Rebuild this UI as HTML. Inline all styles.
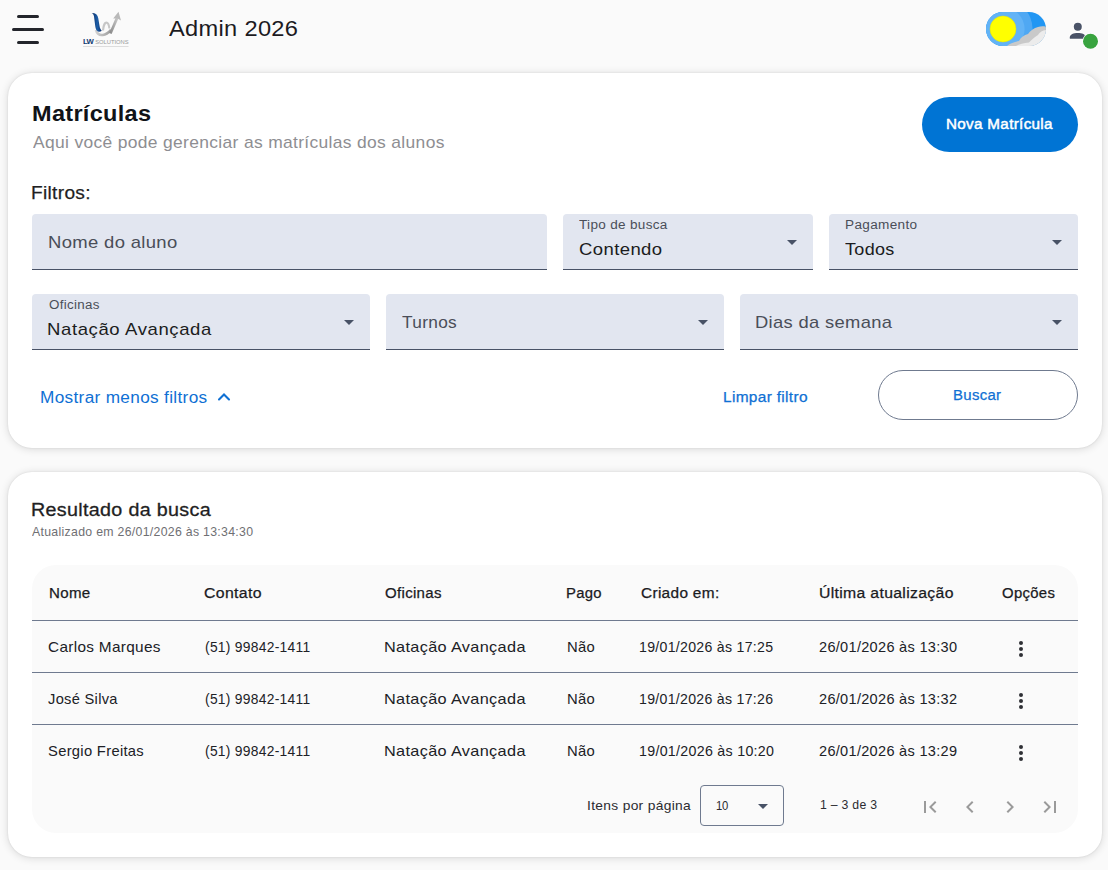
<!DOCTYPE html>
<html><head><meta charset="utf-8"><style>
*{margin:0;padding:0;box-sizing:border-box}
html,body{width:1108px;height:870px;overflow:hidden;background:#fafafa;font-family:"Liberation Sans",sans-serif}
.t{position:absolute;white-space:nowrap;transform-origin:0 0}
.abs{position:absolute}
.card{position:absolute;left:8px;width:1094px;background:#fff;border-radius:24px;box-shadow:0 1px 8px rgba(0,0,0,.14),0 0 2px rgba(0,0,0,.1)}
.field{position:absolute;background:#e2e6f0;border-radius:4px 4px 0 0;border-bottom:1px solid #485266}
.arrow{position:absolute;width:0;height:0;border-left:5px solid transparent;border-right:5px solid transparent;border-top:5px solid #485266}
.line{position:absolute;left:32px;width:1046px;height:1px;background:#6f7a8f}
.dot{position:absolute;width:4px;height:4px;border-radius:50%;background:#2f3035}
</style></head><body>
<!-- hamburger -->
<div class="abs" style="left:17px;top:15px;width:22px;height:3px;border-radius:2px;background:#23252b"></div>
<div class="abs" style="left:12px;top:28px;width:32px;height:3px;border-radius:2px;background:#23252b"></div>
<div class="abs" style="left:17px;top:41px;width:22px;height:3px;border-radius:2px;background:#23252b"></div>
<!-- logo -->
<svg class="abs" style="left:78px;top:8px" width="56" height="44" viewBox="0 0 56 44">
 <defs>
  <linearGradient id="bl" x1="0" y1="0" x2="1" y2="0"><stop offset="0" stop-color="#0a2a62"/><stop offset=".55" stop-color="#1c5ea8"/><stop offset="1" stop-color="#0a2e6c"/></linearGradient>
  <linearGradient id="gr" x1="0" y1="1" x2="1" y2="0"><stop offset="0" stop-color="#8a8a8a"/><stop offset="1" stop-color="#c9c9c9"/></linearGradient>
  <linearGradient id="gr2" x1="0" y1="0" x2="1" y2="0"><stop offset="0" stop-color="#d0d0d0"/><stop offset="1" stop-color="#9c9c9c"/></linearGradient>
 </defs>
 <path d="M18 22 C19 26 22 27.3 24.8 27 C28.2 26.6 30.6 24.5 33 21.8" fill="none" stroke="url(#gr2)" stroke-width="2.6"/>
 <path d="M25 22.5 C25.4 17 27.3 14.6 28.4 14.6 C30 14.6 31 17 31.4 20.5" fill="none" stroke="#c6c6c6" stroke-width="2.1"/>
 <path d="M13.7 5.1 C15.5 6 16.2 8 16.2 10.1 L17.2 17.7 C17.5 20.5 18.5 23.5 21 23.7 C22 23.7 23 23.3 23.8 22.8 C22.8 21.8 21.8 20 21.5 17.7 L20.2 10.1 C19.8 7 17.5 5 13.7 5.1 Z" fill="url(#bl)"/>
 <path d="M32.4 25.5 L39.4 9.4" fill="none" stroke="url(#gr)" stroke-width="2.7"/>
 <path d="M40.5 3.8 L43 12.4 L39.6 10.4 L35.2 10.6 Z" fill="#b9b9b9"/>
 <text x="5" y="36.4" font-family="Liberation Sans" font-weight="700" font-size="7.7" fill="#123a73" letter-spacing="-0.8">LW</text>
 <text x="17.2" y="36.4" font-family="Liberation Sans" font-size="5.8" fill="#999999" letter-spacing="-0.02">SOLUTIONS</text>
 <rect x="5" y="38" width="45.5" height="0.9" fill="#dadada"/>
</svg>
<!-- theme toggle -->
<svg class="abs" style="left:986px;top:12px" width="60" height="34" viewBox="0 0 60 34">
 <defs><clipPath id="pill"><rect x="0" y="0" width="60" height="34" rx="17"/></clipPath></defs>
 <g clip-path="url(#pill)">
  <rect x="0" y="0" width="60" height="34" fill="#2196f3"/>
  <circle cx="17" cy="17" r="29.6" fill="#4fa8f3"/>
  <circle cx="17" cy="17" r="21.6" fill="#62b3f6"/>
  <circle cx="17" cy="17" r="13" fill="#ffff00" stroke="#e8e400" stroke-width=".5"/>
  <path d="M21 34 C24 31 29 30 33 29 C35 25 38 23 42 22 C44 19 48 16 52 15 C55 14 58 14 61 15 L61 34 Z" fill="#c9c9c9"/>
  <path d="M30 34 C33 32 38 31 43 30.5 C46 27 49 25 52 23 C54 20 57 18 61 18 L61 34 Z" fill="#ececec"/>
 </g>
</svg>
<!-- user icon -->
<svg class="abs" style="left:1064px;top:18px" width="40" height="34" viewBox="0 0 40 34">
 <circle cx="13.8" cy="8.8" r="4.9" fill="#fff" opacity=".9"/>
 <path d="M4.9 21.5 L4.9 19 C4.9 15.8 9.3 14.1 13.8 14.1 C18.3 14.1 22.8 15.8 22.8 19 L22.8 21.5 Z" fill="#fff" opacity=".9"/>
 <circle cx="13.8" cy="8.8" r="4" fill="#4a5367"/>
 <path d="M5.8 20.7 L5.8 19.2 C5.8 16.5 9.6 15 13.8 15 C18 15 21.9 16.5 21.9 19.2 L21.9 20.7 Z" fill="#4a5367"/>
 <circle cx="26.5" cy="23.3" r="8.1" fill="#fff"/>
 <circle cx="26.5" cy="23.3" r="7.5" fill="#38a33f"/>
</svg>
<!-- card 1 -->
<div class="card" style="top:72.5px;height:375.5px"></div>
<div class="abs" style="left:922px;top:97px;width:156px;height:55px;border-radius:28px;background:#0074d4"></div>
<div class="field" style="left:32px;top:214px;width:515px;height:56px"></div>
<div class="field" style="left:563px;top:214px;width:250px;height:56px"></div>
<div class="field" style="left:829px;top:214px;width:249px;height:56px"></div>
<div class="arrow" style="left:787px;top:240px"></div>
<div class="arrow" style="left:1052px;top:240px"></div>
<div class="field" style="left:32px;top:294px;width:338px;height:56px"></div>
<div class="field" style="left:386px;top:294px;width:338px;height:56px"></div>
<div class="field" style="left:740px;top:294px;width:338px;height:56px"></div>
<div class="arrow" style="left:344px;top:320px"></div>
<div class="arrow" style="left:698px;top:320px"></div>
<div class="arrow" style="left:1052px;top:320px"></div>
<svg class="abs" style="left:216px;top:390px" width="16" height="12" viewBox="0 0 16 12"><path d="M3 9.5 L8 4.5 L13 9.5" fill="none" stroke="#0f70d4" stroke-width="2.1" stroke-linecap="round"/></svg>
<div class="abs" style="left:878px;top:370px;width:200px;height:50px;border-radius:25px;border:1px solid #6f7a8f"></div>

<!-- card 2 -->
<div class="card" style="top:472px;height:385px"></div>
<div class="abs" style="left:32px;top:565px;width:1046px;height:268px;border-radius:24px;background:#fafafa"></div>
<div class="line" style="top:620px"></div>
<div class="line" style="top:672px"></div>
<div class="line" style="top:724px"></div>
<div class="dot" style="left:1019.3px;top:640.9px"></div><div class="dot" style="left:1019.3px;top:646.9px"></div><div class="dot" style="left:1019.3px;top:652.9px"></div><div class="dot" style="left:1019.3px;top:692.9px"></div><div class="dot" style="left:1019.3px;top:698.9px"></div><div class="dot" style="left:1019.3px;top:704.9px"></div><div class="dot" style="left:1019.3px;top:744.9px"></div><div class="dot" style="left:1019.3px;top:750.9px"></div><div class="dot" style="left:1019.3px;top:756.9px"></div>
<div class="abs" style="left:700px;top:785px;width:84px;height:41px;border-radius:4px;border:1px solid #6f7a8f"></div>
<div class="arrow" style="left:758px;top:804px"></div>
<svg class="abs" style="left:918px;top:795px" width="24" height="24" viewBox="0 0 24 24"><path fill="#9a9a9a" d="M18.41 16.59L13.82 12l4.59-4.59L17 6l-6 6 6 6zM6 6h2v12H6z"/></svg>
<svg class="abs" style="left:958px;top:795px" width="24" height="24" viewBox="0 0 24 24"><path fill="#9a9a9a" d="M15.41 7.41L14 6l-6 6 6 6 1.41-1.41L10.83 12z"/></svg>
<svg class="abs" style="left:998px;top:795px" width="24" height="24" viewBox="0 0 24 24"><path fill="#9a9a9a" d="M10 6L8.59 7.41 13.17 12l-4.58 4.59L10 18l6-6z"/></svg>
<svg class="abs" style="left:1038px;top:795px" width="24" height="24" viewBox="0 0 24 24"><path fill="#9a9a9a" d="M5.59 7.41L10.18 12l-4.59 4.59L7 18l6-6-6-6zM16 6h2v12h-2z"/></svg>

<div class="t" style="left:168.60px;top:15.007px;font-size:22.50px;line-height:27.0px;font-weight:400;letter-spacing:0.300px;color:#1c1b1f;transform:scaleX(1.0504885993485342);">Admin 2026</div>
<div class="t" style="left:31.80px;top:101.005px;font-size:22.05px;line-height:26.46px;font-weight:700;letter-spacing:0.300px;color:#111318;transform:scaleX(1.0654708520179375);">Matrículas</div>
<div class="t" style="left:32.60px;top:134.003px;font-size:15.79px;line-height:18.95px;font-weight:400;letter-spacing:0.300px;color:#8e8e92;transform:scaleX(1.1049101153742955);">Aqui você pode gerenciar as matrículas dos alunos</div>
<div class="t" style="left:31.40px;top:182.011px;font-size:18.77px;line-height:22.53px;font-weight:400;letter-spacing:0.300px;color:#1f1f23;transform:scaleX(1.0188034188034187);-webkit-text-stroke:0.25px #1f1f23;">Filtros:</div>
<div class="t" style="left:48.00px;top:233.006px;font-size:16.54px;line-height:19.84px;font-weight:400;letter-spacing:0.300px;color:#4a4e58;transform:scaleX(1.1168831168831168);">Nome do aluno</div>
<div class="t" style="left:579.00px;top:218.009px;font-size:12.51px;line-height:15.02px;font-weight:400;letter-spacing:0.300px;color:#4a4e58;transform:scaleX(1.0820073439412496);">Tipo de busca</div>
<div class="t" style="left:579.00px;top:240.006px;font-size:16.54px;line-height:19.84px;font-weight:400;letter-spacing:0.358px;color:#1b1c20;transform:scaleX(1.12);">Contendo</div>
<div class="t" style="left:845.00px;top:218.009px;font-size:12.51px;line-height:15.02px;font-weight:400;letter-spacing:0.300px;color:#4a4e58;transform:scaleX(1.0859728506787332);">Pagamento</div>
<div class="t" style="left:845.40px;top:240.006px;font-size:16.54px;line-height:19.84px;font-weight:400;letter-spacing:0.300px;color:#1b1c20;transform:scaleX(1.0884955752212349);">Todos</div>
<div class="t" style="left:48.60px;top:298.009px;font-size:12.51px;line-height:15.02px;font-weight:400;letter-spacing:0.300px;color:#4a4e58;transform:scaleX(1.0697674418604648);">Oficinas</div>
<div class="t" style="left:47.00px;top:320.006px;font-size:16.54px;line-height:19.84px;font-weight:400;letter-spacing:0.549px;color:#1b1c20;transform:scaleX(1.12);">Natação Avançada</div>
<div class="t" style="left:402.00px;top:313.006px;font-size:16.54px;line-height:19.84px;font-weight:400;letter-spacing:0.300px;color:#4a4e58;transform:scaleX(1.0459770114942533);">Turnos</div>
<div class="t" style="left:755.20px;top:313.006px;font-size:16.54px;line-height:19.84px;font-weight:400;letter-spacing:0.300px;color:#4a4e58;transform:scaleX(1.11038961038961);">Dias da semana</div>
<div class="t" style="left:40.00px;top:388.006px;font-size:16.39px;line-height:19.67px;font-weight:400;letter-spacing:0.300px;color:#0f70d4;transform:scaleX(1.0521684475172846);">Mostrar menos filtros</div>
<div class="t" style="left:723.20px;top:389.000px;font-size:14.53px;line-height:17.43px;font-weight:400;letter-spacing:0.300px;color:#0f70d4;transform:scaleX(1.0643127364438822);-webkit-text-stroke:0.25px #0f70d4;">Limpar filtro</div>
<div class="t" style="left:953.00px;top:387.001px;font-size:14.82px;line-height:17.79px;font-weight:400;letter-spacing:0.300px;color:#0f70d4;transform:scaleX(1.0084033613445378);-webkit-text-stroke:0.25px #0f70d4;">Buscar</div>
<div class="t" style="left:946.00px;top:116.006px;font-size:14.00px;line-height:16.81px;font-weight:400;letter-spacing:0.300px;color:#ffffff;transform:scaleX(1.0866462793068288);-webkit-text-stroke:0.45px #ffffff;">Nova Matrícula</div>
<div class="t" style="left:31.20px;top:499.004px;font-size:18.32px;line-height:21.99px;font-weight:400;letter-spacing:0.300px;color:#1f1f23;transform:scaleX(1.0760934691431996);-webkit-text-stroke:0.3px #1f1f23;">Resultado da busca</div>
<div class="t" style="left:32.20px;top:525.003px;font-size:12.37px;line-height:14.84px;font-weight:400;letter-spacing:0.300px;color:#6f6f73;transform:scaleX(0.9950650515926425);">Atualizado em 26/01/2026 às 13:34:30</div>
<div class="t" style="left:48.60px;top:585.009px;font-size:14.23px;line-height:17.07px;font-weight:400;letter-spacing:0.300px;color:#1b1b1f;transform:scaleX(1.0618556701030932);-webkit-text-stroke:0.25px #1b1b1f;">Nome</div>
<div class="t" style="left:203.80px;top:585.009px;font-size:14.23px;line-height:17.07px;font-weight:400;letter-spacing:0.300px;color:#1b1b1f;transform:scaleX(1.1145631067961173);-webkit-text-stroke:0.25px #1b1b1f;">Contato</div>
<div class="t" style="left:385.00px;top:585.009px;font-size:14.23px;line-height:17.07px;font-weight:400;letter-spacing:0.300px;color:#1b1b1f;transform:scaleX(1.0561797752808986);-webkit-text-stroke:0.25px #1b1b1f;">Oficinas</div>
<div class="t" style="left:566.40px;top:585.009px;font-size:14.23px;line-height:17.07px;font-weight:400;letter-spacing:0.300px;color:#1b1b1f;transform:scaleX(1.0439882697947187);-webkit-text-stroke:0.25px #1b1b1f;">Pago</div>
<div class="t" style="left:640.60px;top:585.009px;font-size:14.23px;line-height:17.07px;font-weight:400;letter-spacing:0.300px;color:#1b1b1f;transform:scaleX(1.0818307905686546);-webkit-text-stroke:0.25px #1b1b1f;">Criado em:</div>
<div class="t" style="left:819.40px;top:585.009px;font-size:14.23px;line-height:17.07px;font-weight:400;letter-spacing:0.300px;color:#1b1b1f;transform:scaleX(1.1081750619322859);-webkit-text-stroke:0.25px #1b1b1f;">Última atualização</div>
<div class="t" style="left:1002.00px;top:585.009px;font-size:14.23px;line-height:17.07px;font-weight:400;letter-spacing:0.300px;color:#1b1b1f;transform:scaleX(1.0476190476190512);-webkit-text-stroke:0.25px #1b1b1f;">Opções</div>
<div class="t" style="left:48.00px;top:639.008px;font-size:14.60px;line-height:17.52px;font-weight:400;letter-spacing:0.300px;color:#202126;transform:scaleX(1.052336448598131);">Carlos Marques</div>
<div class="t" style="left:204.60px;top:639.008px;font-size:14.60px;line-height:17.52px;font-weight:400;letter-spacing:0.300px;color:#202126;transform:scaleX(0.9468946894689462);">(51) 99842-1411</div>
<div class="t" style="left:384.20px;top:639.008px;font-size:14.60px;line-height:17.52px;font-weight:400;letter-spacing:0.300px;color:#202126;transform:scaleX(1.1158392434988171);">Natação Avançada</div>
<div class="t" style="left:567.00px;top:639.008px;font-size:14.60px;line-height:17.52px;font-weight:400;letter-spacing:0.300px;color:#202126;transform:scaleX(1.0145985401459836);">Não</div>
<div class="t" style="left:639.40px;top:639.008px;font-size:14.60px;line-height:17.52px;font-weight:400;letter-spacing:0.300px;color:#202126;transform:scaleX(0.9675090252707581);">19/01/2026 às 17:25</div>
<div class="t" style="left:819.00px;top:639.008px;font-size:14.60px;line-height:17.52px;font-weight:400;letter-spacing:0.300px;color:#202126;transform:scaleX(0.9963898916967509);">26/01/2026 às 13:30</div>
<div class="t" style="left:48.00px;top:691.008px;font-size:14.60px;line-height:17.52px;font-weight:400;letter-spacing:0.300px;color:#202126;transform:scaleX(1.0043290043290043);">José Silva</div>
<div class="t" style="left:204.60px;top:691.008px;font-size:14.60px;line-height:17.52px;font-weight:400;letter-spacing:0.300px;color:#202126;transform:scaleX(0.9468946894689462);">(51) 99842-1411</div>
<div class="t" style="left:384.20px;top:691.008px;font-size:14.60px;line-height:17.52px;font-weight:400;letter-spacing:0.300px;color:#202126;transform:scaleX(1.1158392434988171);">Natação Avançada</div>
<div class="t" style="left:567.00px;top:691.008px;font-size:14.60px;line-height:17.52px;font-weight:400;letter-spacing:0.300px;color:#202126;transform:scaleX(1.0145985401459836);">Não</div>
<div class="t" style="left:639.40px;top:691.008px;font-size:14.60px;line-height:17.52px;font-weight:400;letter-spacing:0.300px;color:#202126;transform:scaleX(0.9675090252707581);">19/01/2026 às 17:26</div>
<div class="t" style="left:819.00px;top:691.008px;font-size:14.60px;line-height:17.52px;font-weight:400;letter-spacing:0.300px;color:#202126;transform:scaleX(0.9963898916967509);">26/01/2026 às 13:32</div>
<div class="t" style="left:48.00px;top:743.008px;font-size:14.60px;line-height:17.52px;font-weight:400;letter-spacing:0.300px;color:#202126;transform:scaleX(1.010548523206751);">Sergio Freitas</div>
<div class="t" style="left:204.60px;top:743.008px;font-size:14.60px;line-height:17.52px;font-weight:400;letter-spacing:0.300px;color:#202126;transform:scaleX(0.9468946894689462);">(51) 99842-1411</div>
<div class="t" style="left:384.20px;top:743.008px;font-size:14.60px;line-height:17.52px;font-weight:400;letter-spacing:0.300px;color:#202126;transform:scaleX(1.1158392434988171);">Natação Avançada</div>
<div class="t" style="left:567.00px;top:743.008px;font-size:14.60px;line-height:17.52px;font-weight:400;letter-spacing:0.300px;color:#202126;transform:scaleX(1.0145985401459836);">Não</div>
<div class="t" style="left:639.40px;top:743.008px;font-size:14.60px;line-height:17.52px;font-weight:400;letter-spacing:0.300px;color:#202126;transform:scaleX(0.9747292418772563);">19/01/2026 às 10:20</div>
<div class="t" style="left:819.00px;top:743.008px;font-size:14.60px;line-height:17.52px;font-weight:400;letter-spacing:0.300px;color:#202126;transform:scaleX(0.9963898916967509);">26/01/2026 às 13:29</div>
<div class="t" style="left:586.80px;top:798.005px;font-size:12.81px;line-height:15.37px;font-weight:400;letter-spacing:0.300px;color:#2b2b30;transform:scaleX(1.076763485477178);">Itens por página</div>
<div class="t" style="left:716.30px;top:799.014px;font-size:12.50px;line-height:15.0px;font-weight:400;letter-spacing:-0.300px;color:#2b2b30;transform:scaleX(0.9);">10</div>
<div class="t" style="left:820.00px;top:797.005px;font-size:12.81px;line-height:15.37px;font-weight:400;letter-spacing:0.300px;color:#2b2b30;transform:scaleX(0.9563758389261745);">1 – 3 de 3</div>
</body></html>
